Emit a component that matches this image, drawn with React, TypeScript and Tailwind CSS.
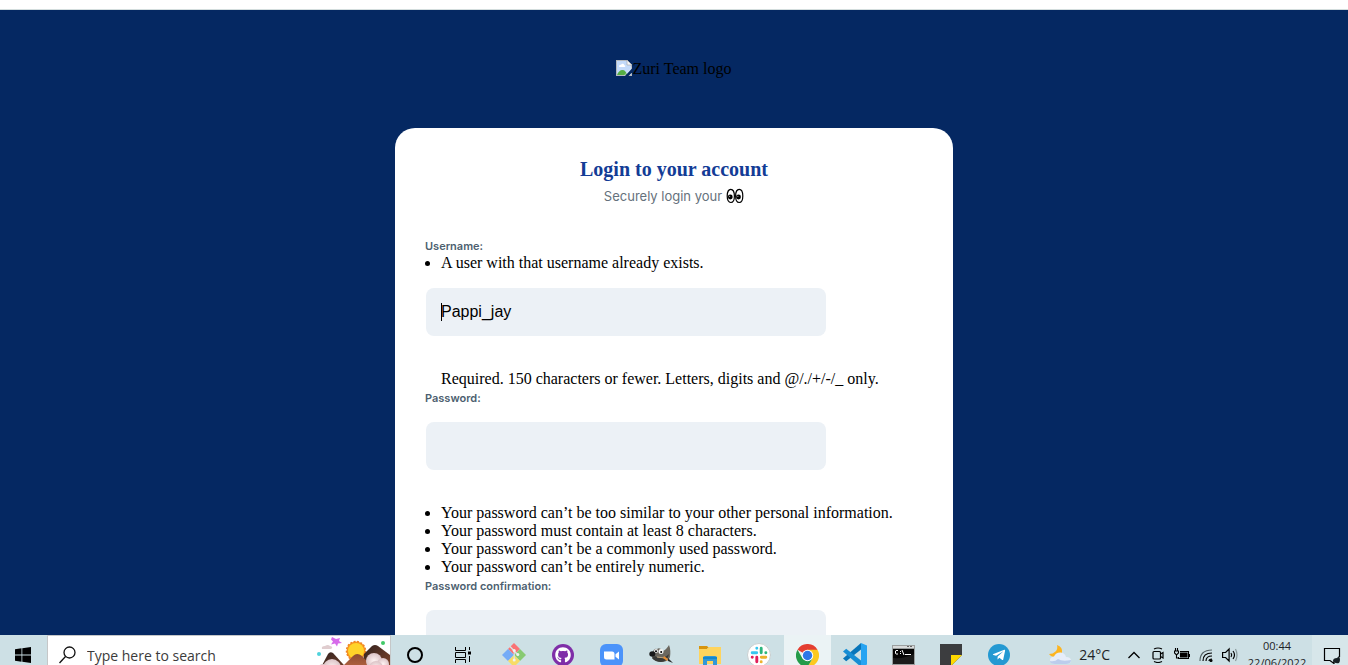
import type { ReactNode } from "react";
import { FaGithub, FaTelegramPlane } from "react-icons/fa";

const serif = "font-['Liberation_Serif',serif]";
const labelClass = "block pt-0.5 font-['Inter',sans-serif] text-[11px] leading-4 font-semibold text-[#4d5f70]";
const inputClass =
  "ml-px block h-12 w-[400px] max-w-full rounded-lg bg-[#ecf1f6] px-[15px] font-['Liberation_Sans',sans-serif] text-base text-black outline-none";

function BrokenImageIcon() {
  return (
    <svg className="mb-0.5 size-4" viewBox="0 0 16 16" aria-hidden="true">
      <path d="M0 0h11l5 5v11H0z" fill="#b4b8bc" />
      <path d="M1 1h9.500l4.500 4.500V15H1z" fill="#c3dafa" />
      <path d="M3 6.500C3 5 4.500 4.600 5 5c.6-1.800 3.200-1.500 3.300.3C9.500 5.200 9.800 7 8.500 7H3.700z" fill="#fff" />
      <path d="M1 15c1-3 3-5 5.500-5S10 12 11.500 15z" fill="#55ad43" />
      <path d="M11 0l5 5h-5z" fill="#f5f6f7" stroke="#a9adb1" strokeWidth=".7" />
      <path d="M16 8.500 9 16h3.500l3.500-3.500z" fill="#052862" />
      <path d="M15.800 7.500 8.300 15.500" stroke="#dfe5ee" strokeWidth=".6" />
    </svg>
  );
}

function EyesIcon() {
  return (
    <svg className="h-4 w-[18px]" viewBox="0 0 18 16" role="img" aria-label="eyes">
      <g fill="#fff" stroke="#000" strokeWidth="1.200">
        <path d="M4.800 1.300C7 1.300 8.400 4 8.400 8s-1.400 6.500-3.600 6.500S1.200 12 1.200 8s1.400-6.700 3.600-6.700z" />
        <path d="M13.200 1.300c2.200 0 3.600 2.700 3.600 6.700s-1.400 6.500-3.600 6.500S9.600 12 9.600 8s1.400-6.700 3.600-6.700z" />
      </g>
      <circle cx="4.300" cy="9" r="2.400" />
      <circle cx="12.500" cy="9" r="2.400" />
      <circle cx="3.700" cy="8.300" r=".5" fill="#fff" />
      <circle cx="11.900" cy="8.300" r=".5" fill="#fff" />
    </svg>
  );
}

function WindowsIcon() {
  return (
    <svg className="size-4" viewBox="0 0 16 16">
      <path d="M0 2.200 6.500 1.300v6.200H0zM7.300 1.200 16 0v7.500H7.300zM0 8.400h6.500v6.300L0 13.800zM7.300 8.400H16V16l-8.700-1.200z" />
    </svg>
  );
}

function SearchArt() {
  return (
    <svg className="h-10 w-[78px] shrink-0" viewBox="0 0 78 40">
      <defs>
        <linearGradient id="rock" x1="0" x2="1" y2="1">
          <stop stopColor="#2d201f" />
          <stop offset="1" stopColor="#8b4a2c" />
        </linearGradient>
        <linearGradient id="peak" x1="0" x2="0" y2="1">
          <stop stopColor="#8e4b30" />
          <stop offset="1" stopColor="#c6714b" />
        </linearGradient>
        <radialGradient id="puff">
          <stop stopColor="#fff4f3" />
          <stop offset="1" stopColor="#dcc4c7" />
        </radialGradient>
      </defs>
      <path d="m20 2 4 2 4-1-1 3 3 2-4 .5-1 3-2-3-4 1 2-3-2-2z" fill="#d76bea" />
      <circle cx="7" cy="19" r="2" fill="#4fd2dc" />
      <circle cx="71" cy="8" r="2" fill="#42c968" />
      <path d="M10 14q-1-3 3-3 3-2 5 0 4 1 1 3z" fill="#e0cdcf" />
      <circle cx="44" cy="16" r="9.500" fill="#f8931d" stroke="#ef8725" strokeWidth="1.500" strokeDasharray="2 1.500" />
      <circle cx="44" cy="16" r="8" fill="#ffd329" />
      <path d="M6 38 16 19q2-3 5-1l20 22H6z" fill="url(#rock)" />
      <path d="m52 19 8-8q3-2 6 0l12 9v20H50z" fill="url(#rock)" />
      <path d="m26 36 15-15q4-4 9 0l18 19H26z" fill="url(#peak)" />
      <g fill="url(#puff)">
        <circle cx="20" cy="33" r="9" />
        <circle cx="11" cy="35" r="6" />
        <circle cx="62" cy="26" r="8" />
        <circle cx="71" cy="29" r="6" />
        <circle cx="64" cy="33" r="7" />
      </g>
    </svg>
  );
}

function TaskViewIcon() {
  return (
    <svg className="h-4 w-[18px]" viewBox="0 0 18 16" fill="none" stroke="#000">
      <path d="M1.500 0v3.500h10V0M1.500 5.500h10v5h-10zM1.500 16v-3.500h10V16M15.500 0v3M15.500 9v6" />
      <path d="M14 4.500h3v3h-3z" fill="#000" stroke="none" />
    </svg>
  );
}

function GitIcon() {
  return (
    <svg className="size-6" viewBox="0 0 24 24">
      <path d="m12 0 6 6-6 6-6-6z" fill="#fa7375" />
      <path d="m6 6 6 6-6 6-6-6z" fill="#75acf7" />
      <path d="m18 6 6 6-6 6-6-6z" fill="#88ca72" />
      <path d="m12 12 6 6-6 6-6-6z" fill="#f7dc68" />
      <path d="m8 3.500 7.500 8M12.200 8v9" stroke="#d5e9e7" strokeWidth="1.200" />
      <g fill="#eef4f2">
        <circle cx="12.200" cy="7.500" r="1.500" />
        <circle cx="15.800" cy="11.500" r="1.500" />
        <circle cx="12.200" cy="17" r="1.500" />
      </g>
    </svg>
  );
}

function GithubIcon() {
  return (
    <span className="flex size-[22px] items-center justify-center rounded-full bg-[#7f2ea8]">
      <FaGithub className="size-4 text-white" />
    </span>
  );
}

function ZoomIcon() {
  return (
    <svg className="size-[23px]" viewBox="0 0 23 23">
      <rect width="23" height="23" rx="6" fill="#4b93fa" />
      <path d="M4 7.500h8q2.500 0 2.500 2.500v5.500h-8Q4 15.500 4 13zM15.500 10.300 19 7.500v8l-3.500-2.800z" fill="#fff" />
    </svg>
  );
}

function GimpIcon() {
  return (
    <svg className="size-6" viewBox="0 0 24 24">
      <path d="M4 9q1-4 4-3 3-2 6 2 3-1 6-6 2 5 1 12-1 4-7 5-7 0-11-4z" fill="#6b675f" />
      <path d="M6 13q7 5 14-2-1 7-8 8-6 0-9-4z" fill="#393936" />
      <circle cx="7" cy="8" r="2" fill="#eee" />
      <circle cx="12" cy="8.500" r="2.500" fill="#f4f4f4" />
      <circle cx="7" cy="8.300" r="1" />
      <circle cx="12.200" cy="9" r="1" />
      <ellipse cx="3.300" cy="11" rx="3" ry="2.800" fill="#171819" />
      <path d="m8 14 8 1" stroke="#b9a27e" />
      <path d="m15 13 4 3-1 2-4-3z" fill="#e58d34" />
      <path d="m19 15 5 5-5-2z" fill="#272727" />
    </svg>
  );
}

function FolderIcon() {
  return (
    <svg className="h-5 w-[22px]" viewBox="0 0 22 20">
      <path d="M0 1h8l2 2h-1L7 5H0z" fill="#d8940d" />
      <path d="M0 4h8l2-2h12v17H0z" fill="#ffd45d" />
      <path d="M4 20v-7q0-2 2-2h10q2 0 2 2v7h-4v-4H8v4z" fill="#3298d7" />
      <path d="M4 12h14v2H4z" fill="#1687cc" />
    </svg>
  );
}

function SlackIcon() {
  return (
    <svg className="size-6" viewBox="0 0 24 24" fill="none" strokeWidth="2.900" strokeLinecap="round">
      <circle cx="12" cy="12" r="11.500" fill="#fff" stroke="#c9cfd0" strokeWidth="1" />
      <path d="M5.200 9.800h4.500M9.800 5.200v.1" stroke="#36c5f0" />
      <path d="M14.200 5.200v4.500M18.800 9.800h.1" stroke="#2eb67d" />
      <path d="M14.300 14.200h4.500M14.200 18.800v.1" stroke="#ecb22e" />
      <path d="M9.800 14.300v4.500M5.200 14.200h.1" stroke="#e01e5a" />
    </svg>
  );
}

function ChromeIcon() {
  return (
    <svg className="size-[23px]" viewBox="0 0 24 24">
      <path d="M12 12 1.600 6A12 12 0 0 1 22.400 6z" fill="#e43e31" />
      <path d="M12 12V6h10.400A12 12 0 0 1 12 24l5.200-9z" fill="#fcc91f" />
      <path d="m12 12 5.200 3L12 24A12 12 0 0 1 1.600 6l5.200 9z" fill="#249b49" />
      <circle cx="12" cy="12" r="6" fill="#fff" />
      <circle cx="12" cy="12" r="4.900" fill="#2e77e8" />
    </svg>
  );
}

function CodeIcon() {
  return (
    <svg className="size-6" viewBox="0 0 24 24">
      <path d="M18 0v6.500L3.200 18.200 0 15.500z" fill="#0875b9" />
      <path d="M18 24v-6.500L3.200 5.800 0 8.500z" fill="#168dd4" />
      <path d="m18 0 6 2.500v19L18 24z" fill="#27a4f2" />
    </svg>
  );
}

function TerminalIcon() {
  return (
    <svg className="h-5 w-[23px]" viewBox="0 0 23 20">
      <path d="M0 0h23v20H0z" fill="#9b9f9f" />
      <path d="M1 1h21v2H1z" fill="#d8dada" />
      <path d="M15 1h2v1h-2zM18 1h2v1h-2z" fill="#666" />
      <path d="M1 4h21v15H1z" fill="#050505" />
      <path d="M1 13q11 1 21-4v10H1z" fill="#1b1b1b" />
      <path d="M6 5.500H4L3.500 6v2.500l.5.500h2M8.500 6v1M8.500 8v1M10 5l2 5M13 9.500h6" fill="none" stroke="#fff" />
    </svg>
  );
}

function NoteIcon() {
  return (
    <svg className="size-[22px]" viewBox="0 0 22 22">
      <path d="M0 0h22v11L11 22H0z" fill="#3c3d3f" />
      <path d="M11 11h11L11 22z" fill="#ffd900" />
    </svg>
  );
}

function TelegramIcon() {
  return (
    <span className="flex size-[22px] items-center justify-center rounded-full bg-[#2499d2] pr-px">
      <FaTelegramPlane className="size-[14px] text-white" />
    </span>
  );
}

function WeatherIcon() {
  return (
    <svg className="h-5 w-[22px]" viewBox="0 0 22 20">
      <path d="M8 0q6 2 5 8-2 4-7 4-4 0-6-3 4 0 6.500-2.500T8 0z" fill="#fdb41f" />
      <path d="M6 19q-5 0-5-4 0-3 4-3.500Q7 7 12 7.500q4 .5 5 4.500 5 0 5 3.500 0 3.500-5 3.500z" fill="#e6edf9" />
      <path d="M6 19q-5 0-5-3 5 1 8-2 4 3 13 1 0 4-5 4z" fill="#bccdec" />
    </svg>
  );
}

function CameraIcon() {
  return (
    <svg className="size-4" viewBox="0 0 16 16" fill="none" stroke="#000" strokeWidth="1.200">
      <rect x="3" y="4.500" width="7.500" height="7.500" rx="1" />
      <path d="m10.500 7 2.500-1.500v5.500l-2.500-1.500M4 2q4-2 8 0M4 14.500q4 2 8 0" />
    </svg>
  );
}

function BatteryIcon() {
  return (
    <svg className="size-4" viewBox="0 0 16 16" fill="none" stroke="#000" strokeWidth="1.100">
      <path d="M6 4.500h8.500v7H4.500V10M15.500 7v3M1.500 1v3M3.500 1v3M.5 4h4v2l-2 2-2-2zM2.500 8v3h2" />
      <path d="M6.500 6H13v4H6.500z" fill="#000" />
    </svg>
  );
}

function WifiIcon() {
  return (
    <svg className="size-4" viewBox="0 0 16 16" fill="none" stroke="#000" strokeWidth="1.200">
      <path d="M2 14Q2 3 14 3" stroke="#566366" />
      <path d="M5 14q0-8 9-8M8 14q0-5 6-5M11 14q0-2 3-2" />
      <circle cx="13" cy="13.500" r="1" fill="#000" />
    </svg>
  );
}

function VolumeIcon() {
  return (
    <svg className="size-4" viewBox="0 0 16 16" fill="none" stroke="#000" strokeWidth="1.200">
      <path d="M.6 5.500h3l3.500-3.500v12l-3.500-3.500h-3zM9 6q1.500 2 0 4M11 4q3 4 0 8" />
      <path d="M13.500 2q3 6 0 12" stroke="#8b9a9d" />
    </svg>
  );
}

function NotificationIcon() {
  return (
    <svg className="h-[18px] w-[18px]" viewBox="0 0 18 18">
      <path d="M11 14.500v3l-4-3H1.500v-12h15V11" fill="none" stroke="#000" strokeWidth="1.200" />
      <path d="M10 15q0-3 4-3l2-2q2 4 0 7-4 1-6-2z" fill="#182024" />
    </svg>
  );
}

function TaskButton({ label, children, width = "w-12" }: { label: string; children: ReactNode; width?: string }) {
  return (
    <button type="button" aria-label={label} className={`flex h-10 shrink-0 items-center justify-center ${width}`}>
      {children}
    </button>
  );
}

function Taskbar() {
  return (
    <footer className="h-[30px] shrink-0 overflow-hidden bg-[#cde0e5] font-['Open_Sans',sans-serif] text-[#1d2326]">
      <div className="flex h-10 items-center">
        <TaskButton label="Start" width="w-[47px] pr-0.5"><WindowsIcon /></TaskButton>
        <label className="flex h-10 w-[344px] shrink-0 items-center overflow-hidden border border-[#c5c7c8] bg-white pl-[11px]">
          <svg className="size-[18px] shrink-0" viewBox="0 0 18 18" fill="none" stroke="#111" strokeWidth="1.300">
            <circle cx="10.500" cy="6.500" r="5.500" />
            <path d="m6.500 10.500-6 6.500" />
          </svg>
          <input
            aria-label="Search"
            placeholder="Type here to search"
            className="ml-2.5 min-w-0 flex-1 bg-transparent pt-0.5 text-sm outline-none placeholder:text-[#3b3b3b]"
          />
          <SearchArt />
        </label>
        <TaskButton label="Cortana"><span className="size-4 rounded-full border-2 border-black" /></TaskButton>
        <TaskButton label="Task view"><TaskViewIcon /></TaskButton>
        <div className="mr-px ml-0.5 flex shrink-0">
          <TaskButton label="Git" width="w-[49px]"><GitIcon /></TaskButton>
          <TaskButton label="GitHub" width="w-[49px]"><GithubIcon /></TaskButton>
          <TaskButton label="Zoom" width="w-[49px]"><ZoomIcon /></TaskButton>
          <TaskButton label="GIMP" width="w-[49px]"><GimpIcon /></TaskButton>
          <TaskButton label="File Explorer" width="w-[49px]"><FolderIcon /></TaskButton>
          <TaskButton label="Slack" width="w-[49px]"><SlackIcon /></TaskButton>
        </div>
        <TaskButton label="Chrome" width="w-[47px] bg-[#ebf3f5]"><ChromeIcon /></TaskButton>
        <TaskButton label="Visual Studio Code"><CodeIcon /></TaskButton>
        <TaskButton label="Command Prompt"><TerminalIcon /></TaskButton>
        <TaskButton label="Sticky Notes"><NoteIcon /></TaskButton>
        <TaskButton label="Telegram"><TelegramIcon /></TaskButton>
        <div className="ml-auto flex shrink-0 items-center">
          <button type="button" className="mr-3 flex items-center gap-2 text-sm"><WeatherIcon />24°C</button>
          <TaskButton label="Show hidden icons" width="w-6">
            <svg className="h-2 w-3" viewBox="0 0 12 8" fill="none" stroke="#000" strokeWidth="1.300"><path d="m.5 7 5.500-5.500L11.500 7" /></svg>
          </TaskButton>
          <TaskButton label="Meet now" width="w-6"><CameraIcon /></TaskButton>
          <TaskButton label="Battery" width="w-6"><BatteryIcon /></TaskButton>
          <TaskButton label="Network" width="w-6"><WifiIcon /></TaskButton>
          <TaskButton label="Volume" width="w-6"><VolumeIcon /></TaskButton>
          <button type="button" className="w-[70px] pb-0.5 text-center text-[11px] leading-[17px]">
            <span className="block">00:44</span>
            <span className="block">22/06/2022</span>
          </button>
          <TaskButton label="Notifications" width="w-9 bg-[#d7e6ea] pl-1"><NotificationIcon /></TaskButton>
        </div>
      </div>
    </footer>
  );
}

const passwordRules = [
  "Your password can’t be too similar to your other personal information.",
  "Your password must contain at least 8 characters.",
  "Your password can’t be a commonly used password.",
  "Your password can’t be entirely numeric.",
];

export default function App() {
  return (
    <div className={`flex h-screen flex-col overflow-hidden bg-[#052862] text-black ${serif}`}>
      <div className="h-2.5 shrink-0 border-b border-[#d3dddd] bg-white" />
      <main className="min-h-0 flex-1 overflow-hidden">
        <header className="flex h-[118px] items-center justify-center text-base">
          <BrokenImageIcon />
          <span>Zuri Team logo</span>
        </header>
        <section className="mx-auto w-full max-w-[558px] rounded-t-[20px] bg-white px-[30px] pt-7 pb-10">
          <h1 className="text-center text-xl leading-[26px] font-bold text-[#133c96]">Login to your account</h1>
          <p className="flex items-center justify-center gap-1 font-['Inter',sans-serif] text-[13px] leading-7 text-[#65717c]">
            Securely login your <EyesIcon />
          </p>
          <form className="mt-[26px] text-base leading-[18px]">
            <label htmlFor="username" className={labelClass}>Username:</label>
            <ul className="list-disc pl-4">
              <li>A user with that username already exists.</li>
            </ul>
            <div className="relative mt-4">
              <input id="username" name="username" defaultValue="Pappi_jay" className={inputClass} />
              <span className="absolute top-[15px] left-4 h-[18px] w-px bg-black" />
            </div>
            <p className="mt-[34px] pl-4">Required. 150 characters or fewer. Letters, digits and @/./+/-/_ only.</p>
            <label htmlFor="password" className={labelClass}>Password:</label>
            <input id="password" type="password" className={`mt-4 ${inputClass}`} />
            <ul className="mt-[34px] list-disc pl-4">
              {passwordRules.map((rule) => (
                <li key={rule}>{rule}</li>
              ))}
            </ul>
            <label htmlFor="confirmation" className={labelClass}>Password confirmation:</label>
            <input id="confirmation" type="password" className={`mt-4 ${inputClass}`} />
          </form>
        </section>
      </main>
      <Taskbar />
    </div>
  );
}
